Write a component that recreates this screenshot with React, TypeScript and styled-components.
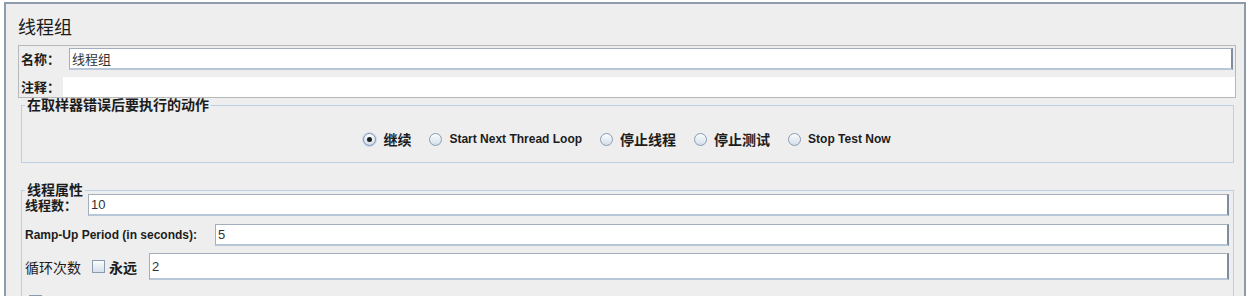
import styled, { createGlobalStyle } from "styled-components";

const GlobalStyle = createGlobalStyle`
  html, body {
    margin: 0;
    padding: 0;
    background: #ffffff;
  }
  body {
    font-family: "Liberation Sans", "Noto Sans CJK SC", sans-serif;
    color: #1c1c1c;
    overflow: hidden;
  }
  * {
    box-sizing: border-box;
  }
`;

const CJK = `"Noto Sans CJK SC", "Liberation Sans", sans-serif`;

const Frame = styled.div`
  margin: 2px 0 0 4px;
  width: 1242px;
  height: 300px;
  background: #eeeeee;
  border: 2px solid #8e9bab;
  border-bottom: none;
  padding: 0 8px 0 12px;
  overflow: hidden;
`;

const Title = styled.h1`
  margin: 11px 0 0;
  height: 22px;
  line-height: 22px;
  font-family: ${CJK};
  font-size: 18px;
  font-weight: normal;
  color: #1a1a1a;
`;

const NamePanel = styled.div`
  margin-top: 8px;
  border: 1px solid #b8b8b8;
  padding: 2px 0 0 2px;
  display: flex;
  flex-direction: column;
  gap: 7px;
`;

const FieldRow = styled.div<{ $height: number; $inset?: number }>`
  display: flex;
  align-items: center;
  height: ${({ $height }) => $height}px;
  padding-right: ${({ $inset = 0 }) => $inset}px;
`;

const Label = styled.span<{ $width?: number; $size?: number; $bold?: boolean; $cjk?: boolean }>`
  flex: none;
  width: ${({ $width }) => ($width ? `${$width}px` : "auto")};
  font-family: ${({ $cjk }) => ($cjk ? CJK : `"Liberation Sans", "Noto Sans CJK SC", sans-serif`)};
  font-size: ${({ $size = 12 }) => $size}px;
  font-weight: ${({ $bold }) => ($bold ? "bold" : "normal")};
  line-height: 14px;
  color: #1c1c1c;
  white-space: nowrap;
`;

const TextField = styled.input<{ $cjk?: boolean }>`
  flex: 1;
  min-width: 0;
  height: 100%;
  margin: 0;
  padding: 0 2px;
  background: #ffffff;
  border-style: solid;
  border-width: 1px 2px 2px 1px;
  border-color: #a3afbc #7f8e9f #b8c7d7 #a3afbc;
  font-family: ${({ $cjk }) => ($cjk ? CJK : `"Liberation Sans", sans-serif`)};
  font-size: 13px;
  color: #333333;
  outline: none;
`;

const PlainField = styled.input`
  flex: 1;
  min-width: 0;
  height: 100%;
  margin: 0;
  padding: 0 2px;
  border: none;
  background: #ffffff;
  font-size: 13px;
  outline: none;
`;

const Group = styled.fieldset<{ $top: number }>`
  margin: ${({ $top }) => $top}px 2px 0 3px;
  padding: 0 4px 0 3px;
  min-width: 0;
  border: 1px solid #bccfe2;
`;

const Legend = styled.legend`
  margin: 0;
  padding: 0 2px;
  height: 14px;
  line-height: 13px;
  font-family: ${CJK};
  font-size: 14px;
  font-weight: bold;
  color: #1c1c1c;
  white-space: nowrap;
`;

const RadioRow = styled.div`
  display: flex;
  justify-content: center;
  align-items: center;
  gap: 18px;
  height: 16px;
  margin: 19px 0 15px;
`;

const RadioOption = styled.label`
  display: flex;
  align-items: center;
  gap: 7px;
`;

const RadioDot = styled.span<{ $checked?: boolean }>`
  position: relative;
  flex: none;
  width: 13px;
  height: 13px;
  border-radius: 50%;
  border: 1px solid ${({ $checked }) => ($checked ? "#7c93ad" : "#8a9bb0")};
  background: linear-gradient(#fbfcfe, #d3dee9);
  box-shadow: ${({ $checked }) => ($checked ? "0 0 0 1px #c9d9ea" : "none")};

  &::after {
    content: "";
    display: ${({ $checked }) => ($checked ? "block" : "none")};
    position: absolute;
    left: 3px;
    top: 3px;
    width: 5px;
    height: 5px;
    border-radius: 50%;
    background: #1e1e1e;
  }
`;

const OptionText = styled.span<{ $cjk?: boolean }>`
  font-family: ${({ $cjk }) => ($cjk ? CJK : `"Liberation Sans", sans-serif`)};
  font-size: ${({ $cjk }) => ($cjk ? 14 : 12)}px;
  font-weight: bold;
  line-height: 16px;
  color: #1c1c1c;
  white-space: nowrap;
`;

const ThreadRows = styled.div`
  display: flex;
  flex-direction: column;
  margin-top: -3px;
  padding-bottom: 20px;
`;

const ThreadRow = styled(FieldRow)<{ $gap?: number }>`
  margin-top: ${({ $gap = 0 }) => $gap}px;
`;

const CheckOption = styled.label<{ $width?: number; $indent?: number }>`
  flex: none;
  display: flex;
  align-items: center;
  gap: 4px;
  width: ${({ $width }) => ($width ? `${$width}px` : "auto")};
  padding-left: ${({ $indent = 0 }) => $indent}px;
`;

const CheckBox = styled.span`
  flex: none;
  width: 13px;
  height: 13px;
  border: 1px solid #8a9bb0;
  background: linear-gradient(#fbfcfd, #d6e0eb);
`;

const actions = [
  { label: "继续", cjk: true, checked: true },
  { label: "Start Next Thread Loop" },
  { label: "停止线程", cjk: true },
  { label: "停止测试", cjk: true },
  { label: "Stop Test Now" },
];

export default function App() {
  return (
    <>
      <GlobalStyle />
      <Frame>
        <Title>线程组</Title>
        <NamePanel>
          <FieldRow $height={22} $inset={2}>
            <Label $width={48} $size={13} $bold $cjk>名称：</Label>
            <TextField $cjk defaultValue="线程组" />
          </FieldRow>
          <FieldRow $height={20}>
            <Label $width={42} $size={13} $bold $cjk>注释：</Label>
            <PlainField defaultValue="" />
          </FieldRow>
        </NamePanel>

        <Group $top={0}>
          <Legend>在取样器错误后要执行的动作</Legend>
          <RadioRow>
            {actions.map((a) => (
              <RadioOption key={a.label}>
                <RadioDot $checked={a.checked} />
                <OptionText $cjk={a.cjk}>{a.label}</OptionText>
              </RadioOption>
            ))}
          </RadioRow>
        </Group>

        <Group $top={20}>
          <Legend>线程属性</Legend>
          <ThreadRows>
            <ThreadRow $height={22}>
              <Label $width={63} $size={13} $bold $cjk>线程数：</Label>
              <TextField defaultValue="10" />
            </ThreadRow>
            <ThreadRow $height={22} $gap={8}>
              <Label $width={190} $size={12} $bold>Ramp-Up Period (in seconds):</Label>
              <TextField defaultValue="5" />
            </ThreadRow>
            <ThreadRow $height={27} $gap={7}>
              <Label $width={67} $size={14} $cjk>循环次数</Label>
              <CheckOption $width={57}>
                <CheckBox />
                <Label $size={14} $bold $cjk>永远</Label>
              </CheckOption>
              <TextField defaultValue="2" />
            </ThreadRow>
            <ThreadRow $height={16} $gap={13}>
              <CheckOption $indent={4}>
                <CheckBox />
              </CheckOption>
            </ThreadRow>
          </ThreadRows>
        </Group>
      </Frame>
    </>
  );
}
